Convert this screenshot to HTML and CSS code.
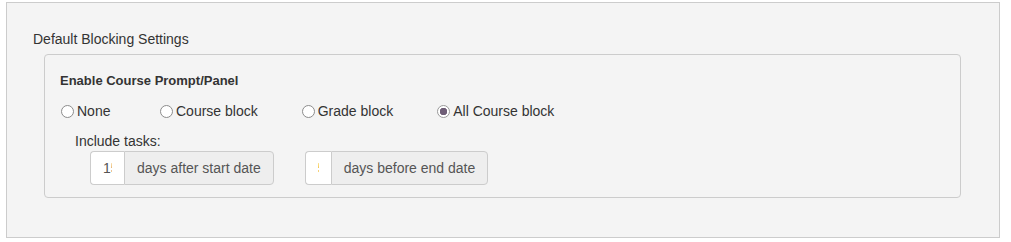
FILE: index.html
```html
<!DOCTYPE html>
<html>
<head>
<meta charset="utf-8">
<link rel="stylesheet" href="styles.css">
</head>
<body>
<div class="panel">
  <div class="heading">Default Blocking Settings</div>
  <div class="group">
    <div class="title">Enable Course Prompt/Panel</div>
    <div class="radios">
      <label class="opt opt-none"><input type="radio" name="b" class="radio"><span>None</span></label>
      <label class="opt opt-course"><input type="radio" name="b" class="radio"><span>Course block</span></label>
      <label class="opt opt-grade"><input type="radio" name="b" class="radio"><span>Grade block</span></label>
      <label class="opt"><input type="radio" name="b" class="radio" checked><span>All Course block</span></label>
    </div>
    <div class="tasks-label">Include tasks:</div>
    <div class="inputs">
      <div class="input-group">
        <input class="num num-a" type="text" value="15">
        <span class="addon">days after start date</span>
      </div>
      <div class="input-group">
        <input class="num num-b" type="text" value="5">
        <span class="addon">days before end date</span>
      </div>
    </div>
  </div>
</div>
</body>
</html>
```

FILE: styles.css
```css
html, body {
  margin: 0;
  padding: 0;
  background: #ffffff;
}
body {
  padding: 2px 11px 0 6px;
  font-family: "Liberation Sans", Arial, sans-serif;
  color: #333333;
  font-size: 14px;
}
.panel {
  background: #f4f4f4;
  border: 1px solid #cccccc;
  height: 236px;
  box-sizing: border-box;
  padding: 26px 38px 0 26px;
}
.heading {
  font-size: 14px;
  line-height: 20px;
}
.group {
  margin: 5px 0 0 11px;
  border: 1px solid #cccccc;
  border-radius: 4px;
  padding: 17px 15px 12px 15px;
}
.title {
  font-weight: bold;
  font-size: 13px;
  line-height: 17px;
}
.radios {
  display: flex;
  margin-top: 12px;
  line-height: 20px;
}
.opt {
  display: flex;
  align-items: center;
  margin-right: 43px;
}
.opt-none { width: 56px; }
.radio {
  appearance: none;
  -webkit-appearance: none;
  width: 13px;
  height: 13px;
  margin: 0 3px 0 1px;
  border: 1px solid #8c8c8c;
  border-radius: 50%;
  background: #ffffff;
  box-sizing: border-box;
}
.radio:checked {
  background: radial-gradient(circle, #6e5d76 0 3.5px, #ffffff 4px);
  border-color: #9a9a9a;
}
.tasks-label {
  margin: 10px 0 0 15px;
  line-height: 20px;
}
.inputs {
  display: flex;
  margin-left: 30px;
  gap: 31px;
}
.input-group {
  display: flex;
  height: 34px;
}
.num {
  box-sizing: border-box;
  height: 34px;
  padding: 6px 12px;
  border: 1px solid #cccccc;
  border-right: 0;
  border-radius: 4px 0 0 4px;
  background: #ffffff;
  font-family: "Liberation Sans", Arial, sans-serif;
  font-size: 14px;
  color: #555555;
  margin: 0;
  outline: none;
}
.num-a { width: 34px; }
.num-b { width: 26px; color: #c47a1a; }
.addon {
  box-sizing: border-box;
  height: 34px;
  padding: 6px 12px;
  border: 1px solid #cccccc;
  border-radius: 0 4px 4px 0;
  background: #eeeeee;
  color: #555555;
  line-height: 20px;
  white-space: nowrap;
}
```
